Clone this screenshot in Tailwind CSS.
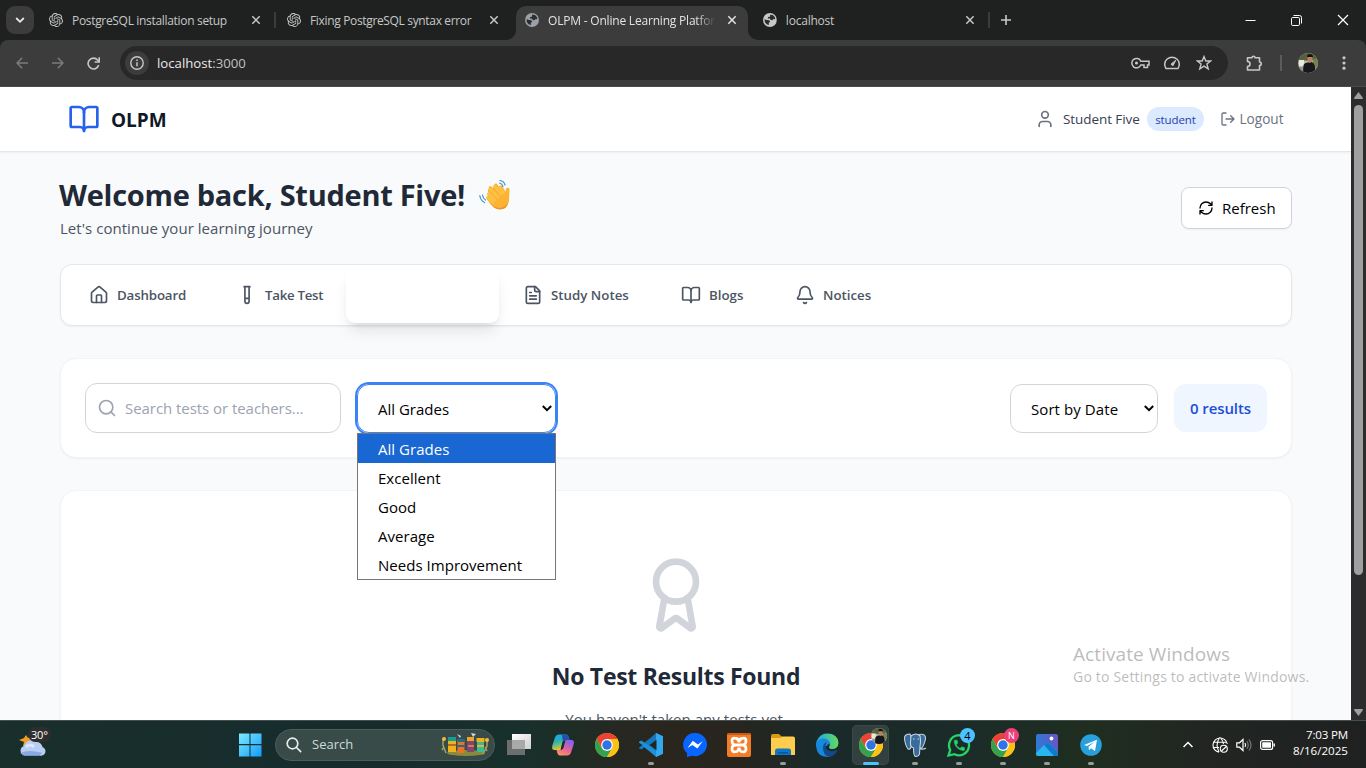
<!DOCTYPE html>
<html lang="en">
<head>
<meta charset="utf-8">
<title>OLPM - Online Learning Platform</title>
<script src="https://cdn.jsdelivr.net/npm/@tailwindcss/browser@4"></script>
</head>
<body class="w-[1366px] h-[768px] overflow-hidden flex flex-col font-['Open_Sans','Noto_Sans',sans-serif] bg-[#f9fafb] text-black relative">

<svg class="hidden">
  <symbol id="gpt" viewBox="0 0 24 24"><path fill="currentColor" d="M22.2819 9.8211a5.9847 5.9847 0 0 0-.5157-4.9108 6.0462 6.0462 0 0 0-6.5098-2.9A6.0651 6.0651 0 0 0 4.9807 4.1818a5.9847 5.9847 0 0 0-3.9977 2.9 6.0462 6.0462 0 0 0 .7427 7.0966 5.98 5.98 0 0 0 .511 4.9107 6.051 6.051 0 0 0 6.5146 2.9001A5.9847 5.9847 0 0 0 13.2599 24a6.0557 6.0557 0 0 0 5.7718-4.2058 5.9894 5.9894 0 0 0 3.9977-2.9001 6.0557 6.0557 0 0 0-.7475-7.0729zm-9.022 12.6081a4.4755 4.4755 0 0 1-2.8764-1.0408l.1419-.0804 4.7783-2.7582a.7948.7948 0 0 0 .3927-.6813v-6.7369l2.02 1.1686a.071.071 0 0 1 .038.052v5.5826a4.504 4.504 0 0 1-4.4945 4.4944zm-9.6607-4.1254a4.4708 4.4708 0 0 1-.5346-3.0137l.142.0852 4.783 2.7582a.7712.7712 0 0 0 .7806 0l5.8428-3.3685v2.3324a.0804.0804 0 0 1-.0332.0615L9.74 19.9502a4.4992 4.4992 0 0 1-6.1408-1.6464zM2.3408 7.8956a4.485 4.485 0 0 1 2.3655-1.9728V11.6a.7664.7664 0 0 0 .3879.6765l5.8144 3.3543-2.0201 1.1685a.0757.0757 0 0 1-.071 0l-4.8303-2.7865A4.504 4.504 0 0 1 2.3408 7.872zm16.5963 3.8558L13.1038 8.364 15.1192 7.2a.0757.0757 0 0 1 .071 0l4.8303 2.7913a4.4944 4.4944 0 0 1-.6765 8.1042v-5.6772a.79.79 0 0 0-.407-.667zm2.0107-3.0231l-.142-.0852-4.7735-2.7818a.7759.7759 0 0 0-.7854 0L9.409 9.2297V6.8974a.0662.0662 0 0 1 .0284-.0615l4.8303-2.7866a4.4992 4.4992 0 0 1 6.6802 4.66zM8.3065 12.863l-2.02-1.1638a.0804.0804 0 0 1-.038-.0567V6.0742a4.4992 4.4992 0 0 1 7.3757-3.4537l-.142.0805L8.704 5.459a.7948.7948 0 0 0-.3927.6813zm1.0976-2.3654l2.602-1.4998 2.6069 1.4998v2.9994l-2.5974 1.4997-2.6067-1.4997Z"/></symbol>
  <symbol id="globe" viewBox="0 0 14 14"><circle cx="7" cy="7" r="7" fill="currentColor"/><path d="M7.2 1.6 10 1.9 12 4.2 12.3 6.3 10.6 5.9 9.4 7.3 7.6 6.9 7 5.6 4.7 5.4 5.2 4 7 3.8Z M1.6 6.2 4 6.9 6.4 7.2 7.2 9 5.8 9.8 6 12.1 3.6 11.2 1.8 9Z" fill="#2c2d2d"/></symbol>
  <symbol id="x" viewBox="0 0 10 10"><path d="M1.3 1.3 8.7 8.7M8.7 1.3 1.3 8.7" stroke="currentColor" stroke-width="1.5" fill="none"/></symbol>
  <symbol id="book" viewBox="0 0 24 24" fill="none" stroke="currentColor" stroke-width="2" stroke-linecap="round" stroke-linejoin="round"><path d="M12 7v14"/><path d="M3 18a1 1 0 0 1-1-1V4a1 1 0 0 1 1-1h5a4 4 0 0 1 4 4 4 4 0 0 1 4-4h5a1 1 0 0 1 1 1v13a1 1 0 0 1-1 1h-6a3 3 0 0 0-3 3 3 3 0 0 0-3-3z"/></symbol>
  <symbol id="chrome" viewBox="0 0 24 24"><circle cx="12" cy="12" r="12" fill="#fbc116"/><path d="M1.6 6A12 12 0 0 1 22.4 6H12L6.8 15Z" fill="#ea4335"/><path d="M1.6 6A12 12 0 0 0 12 24L17.2 15 12 17.5 6.8 15Z" fill="#34a14f"/><path d="M22.4 6A12 12 0 0 1 12 24L17.2 15 18 12 16 6Z" fill="#fbc116"/><circle cx="12" cy="12" r="5.9" fill="#fff"/><circle cx="12" cy="12" r="4.7" fill="#2f73e8"/></symbol>
  <symbol id="avatar" viewBox="0 0 20 20"><path d="M0 0h20v20H0z" fill="#b9bba4"/><path d="M0 0h20v5L13 8 0 7z" fill="#56613e"/><path d="M1 7h5v6H1z" fill="#e8e9df"/><path d="M15 6h5v9h-5z" fill="#71844a"/><path d="M0 14h20v6H0z" fill="#9b8f84"/><path d="M5 20 5.500 12Q7 9 10 9.500L14 9Q18 11 17 20Z" fill="#17171c"/><path d="M9.500 3h5v5l-2.500 2-2.500-2z" fill="#b98269"/><path d="M9 4Q9 1 12 1T15 4L14 4H10Z" fill="#17120f"/></symbol>
</svg>

<!-- Browser tab strip -->
<div class="h-10 shrink-0 bg-[#1f2120] flex items-start text-[#c7c8c8] text-[12px] relative">
  <div class="w-10 h-10 flex items-center pl-1.5">
    <div class="w-7 h-7 rounded-[9px] bg-[#3c3c3c] flex items-center justify-center">
      <svg class="w-[10px] h-[10px] text-[#e8e8e8]" viewBox="0 0 10 10"><path d="M1.2 3 5 6.8 8.800 3" fill="none" stroke="currentColor" stroke-width="1.8"/></svg>
    </div>
  </div>
  <div class="w-[238px] h-10 flex items-center pl-[9px]">
    <svg class="w-[14px] h-[14px]"><use href="#gpt"/></svg>
    <span class="ml-[9px] w-[179px] pt-0.5 whitespace-nowrap tracking-[-0.32px]">PostgreSQL installation setup</span>
    <svg class="w-[10px] h-[10px]"><use href="#x"/></svg>
    <div class="w-[2px] h-4 bg-[#3c3c3c] ml-[13px]"></div>
  </div>
  <div class="w-[238px] h-10 flex items-center pl-[9px]">
    <svg class="w-[14px] h-[14px]"><use href="#gpt"/></svg>
    <span class="ml-[9px] w-[179px] pt-0.5 whitespace-nowrap tracking-[-0.34px]">Fixing PostgreSQL syntax error</span>
    <svg class="w-[10px] h-[10px]"><use href="#x"/></svg>
  </div>
  <div class="w-[232px] h-[34px] mt-1.5 rounded-t-[10px] bg-[#3c3c3c] flex items-center pl-[9px] pb-1.5 text-[#e3e3e3] relative">
    <svg class="absolute -left-[10px] bottom-0 w-[10px] h-[10px]" viewBox="0 0 10 10"><path d="M10 0V10H0A10 10 0 0 0 10 0" fill="#3c3c3c"/></svg>
    <svg class="absolute -right-[10px] bottom-0 w-[10px] h-[10px]" viewBox="0 0 10 10"><path d="M0 0V10H10A10 10 0 0 1 0 0" fill="#3c3c3c"/></svg>
    <svg class="w-[14px] h-[14px] text-[#9aa0a8]"><use href="#globe"/></svg>
    <span class="ml-[9px] w-[168px] pt-0.5 overflow-hidden whitespace-nowrap tracking-[-0.2px] [mask-image:linear-gradient(to_right,black_88%,transparent)]">OLPM - Online Learning Platform</span>
    <svg class="w-[10px] h-[10px] ml-[11px]"><use href="#x"/></svg>
  </div>
  <div class="w-[242px] h-10 flex items-center pl-[15px]">
    <svg class="w-[14px] h-[14px]"><use href="#globe"/></svg>
    <span class="ml-[9px] w-[181px] pt-0.5 whitespace-nowrap tracking-[-0.22px]">localhost</span>
    <svg class="w-[10px] h-[10px]"><use href="#x"/></svg>
    <div class="w-[2px] h-4 bg-[#3c3c3c] ml-[13px]"></div>
  </div>
  <div class="h-10 flex-1 flex items-center pl-[11px] pr-[17px] justify-between">
    <svg class="w-[10px] h-[10px]" viewBox="0 0 10 10"><path d="M5 0v10M0 5h10" stroke="currentColor" stroke-width="1.6"/></svg>
    <div class="flex items-center gap-[35px] text-white">
      <svg class="w-[11px] h-[11px]" viewBox="0 0 11 11"><path d="M.5 5.500h10" stroke="currentColor"/></svg>
      <svg class="w-[11px] h-[11px]" viewBox="0 0 11 11" fill="none" stroke="currentColor"><rect x=".5" y="2.500" width="8" height="8" rx="1.200"/><path d="M2.500 .500H8.500A2 2 0 0 1 10.500 2.500V8.500"/></svg>
      <svg class="w-[12px] h-[12px]" viewBox="0 0 12 12"><path d="M1 1 11 11M11 1 1 11" stroke="currentColor" stroke-width="1.200"/></svg>
    </div>
  </div>
</div>

<!-- Address bar -->
<div class="h-[47px] shrink-0 bg-[#1f2120]">
<div class="h-[47px] bg-[#3c3c3c] rounded-t-[8px] border-b border-[#4a4a4a] flex items-center text-[#c7c7c7]">
  <div class="flex w-[120px] pl-4 gap-6 items-center">
    <svg class="w-3 h-3 text-[#7b7b7b]" viewBox="0 0 12 12" fill="none" stroke="currentColor" stroke-width="1.500"><path d="M12 6H1M6.200 .8 1 6l5.200 5.200"/></svg>
    <svg class="w-3 h-3 text-[#7b7b7b]" viewBox="0 0 12 12" fill="none" stroke="currentColor" stroke-width="1.500"><path d="M0 6H11M5.800 .8 11 6 5.800 11.200"/></svg>
    <svg class="w-[13px] h-[13px] -ml-px" viewBox="0 0 13 13" fill="none" stroke="currentColor" stroke-width="1.600"><path d="M11.700 8A5.400 5.400 0 1 1 10.600 3L12 4.600"/><path d="M12.200 .3V5H7.600"/></svg>
  </div>
  <div class="w-[1108px] h-[34px] rounded-full bg-[#282828] flex items-center pl-[5px] pr-4">
    <div class="w-6 h-6 rounded-full bg-[#3c3c3c] flex items-center justify-center">
      <svg class="w-[14px] h-[14px]" viewBox="0 0 14 14"><circle cx="7" cy="7" r="6.200" fill="none" stroke="currentColor" stroke-width="1.400"/><path d="M7 6.200V10.300M7 3.600V5" stroke="currentColor" stroke-width="1.500"/></svg>
    </div>
    <span class="ml-2 pt-px text-[13.200px] text-[#e8e8e8] flex-1">localhost<span class="text-[#c0c0c0]">:3000</span></span>
    <div class="flex items-center gap-[14px]">
      <svg class="w-[19px] h-[12px] -ml-px" viewBox="0 0 19 12" fill="none" stroke="currentColor" stroke-width="1.500"><path d="M9.800 4.200H18V8H16.500V10.500H13V8H9.800A4.700 4.700 0 1 1 9.800 4.200Z"/><circle cx="5.500" cy="6" r="1.600" fill="currentColor" stroke="none"/></svg>
      <svg class="w-[18px] h-[14px] -ml-px mr-px" viewBox="0 0 18 14" fill="none" stroke="currentColor" stroke-width="1.500"><path d="M3 12.600A7.300 7.300 0 1 1 15 12.600Z"/><path d="M12.800 4.200 8 8.200 9.800 10Z" fill="currentColor" stroke-width="1"/></svg>
      <svg class="w-4 h-4" viewBox="0 0 16 16" fill="none" stroke="currentColor" stroke-width="1.400"><path d="M8 1.600 9.800 6H14.500L10.900 9 12.200 13.900 8 11.200 3.800 13.900 5.100 9 1.500 6H6.200Z"/></svg>
    </div>
  </div>
  <svg class="w-[17px] h-[17px] ml-[18px]" viewBox="0 0 17 17" fill="none" stroke="currentColor" stroke-width="1.600"><path d="M1.500 2.800H6A1.500 1.500 0 0 1 9 2.800H13.500V7A1.700 1.700 0 0 1 13.500 10.500V15H1.500V11.500A2.300 2.300 0 0 0 1.500 6.500Z" stroke-linejoin="round"/></svg>
  <div class="w-[2px] h-4 bg-[#5c5c5c] ml-[17px]"></div>
  <svg class="w-5 h-5 ml-4 rounded-full overflow-hidden"><use href="#avatar"/></svg>
  <svg class="w-1 h-[14px] ml-[24px]" viewBox="0 0 4 14" fill="currentColor"><circle cx="2" cy="1.800" r="1.600"/><circle cx="2" cy="7" r="1.600"/><circle cx="2" cy="12.200" r="1.600"/></svg>
</div>
</div>

<!-- Web page -->
<div class="h-[633px] shrink-0 flex">
  <div class="w-[1351px] h-[633px] overflow-hidden bg-[#f9fafb]">
    <header class="h-[65px] bg-white border-b border-[#e5e7eb] shadow-xs flex items-center pl-[68px] pr-[67px]">
      <svg class="w-8 h-8 text-[#2563eb]"><use href="#book"/></svg>
      <span class="ml-[11px] text-[19px] font-bold text-[#111827] pt-0.5">OLPM</span>
      <div class="ml-auto flex items-center">
        <svg class="w-5 h-5 text-[#6b7280]" viewBox="0 0 24 24" fill="none" stroke="currentColor" stroke-width="2" stroke-linecap="round" stroke-linejoin="round"><path d="M19 21v-2a4 4 0 0 0-4-4H9a4 4 0 0 0-4 4v2"/><circle cx="12" cy="7" r="4"/></svg>
        <span class="ml-2 w-[84px] text-[13.500px] text-[#374151] whitespace-nowrap tracking-[-0.08px]">Student Five</span>
        <span class="w-[57px] h-6 rounded-full bg-[#dbeafe] text-[#1e40af] text-[11.500px] tracking-[-0.1px] pt-px flex items-center justify-center">student</span>
        <svg class="w-4 h-4 ml-4 text-[#6b7280]" viewBox="0 0 24 24" fill="none" stroke="currentColor" stroke-width="2" stroke-linecap="round" stroke-linejoin="round"><path d="M9 21H5a2 2 0 0 1-2-2V5a2 2 0 0 1 2-2h4M16 17l5-5-5-5M21 12H9"/></svg>
        <span class="ml-[3.500px] w-[44.500px] text-[13.600px] text-[#6b7280]">Logout</span>
      </div>
    </header>

    <main class="pl-[60px] pr-[59px] pt-[23px]">
      <div class="flex justify-between">
        <div>
          <h1 class="h-10 flex items-center text-[29px] font-bold text-[#1f2937] whitespace-nowrap tracking-[-0.28px]"><span class="w-[419px] -ml-px mr-px">Welcome back, Student Five!</span>
            <svg class="w-8 h-8" viewBox="0 0 32 32"><path d="M10 9.500Q9 7 11.500 7L14 9 15 6Q16.500 3.500 18.500 5.500L20 8Q21.500 5.500 23.500 7.500L26.500 13 27 10Q28.500 7 30.500 10L30 22Q28 30 20.500 30 16 30 12 25.500L7.500 20Q6.500 17.500 9 17.500 7 15 9.500 14 8 11 10 9.500Z" fill="#fbb331"/><path d="M11 10 19 18M15.500 7 22 15M20.500 8 24.500 14M9.500 14.500 16 21M8.500 18.500 14 23" stroke="#fdc248" stroke-width="2.600" stroke-linecap="round" fill="none"/><path d="M10 23Q15 29 21 29 27 28 29.500 23 28 30.500 21 30.500 15 30.500 10 23Z" fill="#ee8f2b"/><path d="M21 1.500Q25 2 26 6M20.500 4Q23 4.500 24 7.500M.8 16.500Q1.500 21.500 5.500 23.500M3.500 16Q4 19.500 6.500 21" stroke="#3f93d2" stroke-width="1.200" fill="none" stroke-linecap="round"/></svg>
          </h1>
          <p class="h-6 leading-6 mt-px text-[15px] text-[#4b5563] tracking-[0.04px]">Let's continue your learning journey</p>
        </div>
        <button class="mt-[12px] w-[111px] h-[42px] rounded-lg border border-[#d1d5db] bg-white shadow-xs flex items-center pl-4 text-[15px]">
          <svg class="w-4 h-4 mr-2" viewBox="0 0 24 24" fill="none" stroke="currentColor" stroke-width="2" stroke-linecap="round" stroke-linejoin="round"><path d="M3 12a9 9 0 0 1 9-9 9.750 9.750 0 0 1 6.740 2.740L21 8M21 3v5h-5M21 12a9 9 0 0 1-9 9 9.750 9.750 0 0 1-6.740-2.740L3 16M8 16H3v5"/></svg>Refresh
        </button>
      </div>

      <nav class="mt-[24px] h-[62px] rounded-xl border border-[#e5e7eb] bg-white shadow-xs flex items-center pl-1 text-[13.300px] font-semibold text-[#4b5563] whitespace-nowrap [&>a]:flex [&>a]:items-center [&>a]:pl-6 [&>a]:gap-2 [&_svg]:size-5 [&_span]:pt-px">
        <a class="w-[148px] tracking-[-0.15px]"><svg viewBox="0 0 24 24" fill="none" stroke="currentColor" stroke-width="2" stroke-linecap="round" stroke-linejoin="round"><path d="M15 21v-8a1 1 0 0 0-1-1h-4a1 1 0 0 0-1 1v8"/><path d="M3 10a2 2 0 0 1 .709-1.528l7-5.999a2 2 0 0 1 2.582 0l7 5.999A2 2 0 0 1 21 10v9a2 2 0 0 1-2 2H5a2 2 0 0 1-2-2z"/></svg><span>Dashboard</span></a>
        <a class="w-[133px] tracking-[-0.3px]"><svg viewBox="0 0 24 24" fill="none" stroke="currentColor" stroke-width="2" stroke-linecap="round" stroke-linejoin="round"><path d="M14.500 2v17.500c0 1.400-1.100 2.500-2.500 2.500c-1.400 0-2.500-1.100-2.500-2.500V2M8.500 2h7M14.500 16h-5"/></svg><span>Take Test</span></a>
        <a class="w-[153px] h-[55px] mt-px rounded-[9px] bg-white shadow-lg"></a>
        <a class="w-[158px]"><svg viewBox="0 0 24 24" fill="none" stroke="currentColor" stroke-width="2" stroke-linecap="round" stroke-linejoin="round"><path d="M15 2H6a2 2 0 0 0-2 2v16a2 2 0 0 0 2 2h12a2 2 0 0 0 2-2V7Z"/><path d="M14 2v4a2 2 0 0 0 2 2h4M10 9H8M16 13H8M16 17H8"/></svg><span>Study Notes</span></a>
        <a class="w-[114px]"><svg><use href="#book"/></svg><span>Blogs</span></a>
        <a class="w-[126px]"><svg viewBox="0 0 24 24" fill="none" stroke="currentColor" stroke-width="2" stroke-linecap="round" stroke-linejoin="round"><path d="M10.268 21a2 2 0 0 0 3.464 0"/><path d="M3.262 15.326A1 1 0 0 0 4 17h16a1 1 0 0 0 .74-1.673C19.410 13.956 18 12.499 18 8A6 6 0 0 0 6 8c0 4.499-1.411 5.956-2.738 7.326"/></svg><span>Notices</span></a>
      </nav>

      <section class="mt-8 h-[100px] rounded-2xl border border-[#f3f4f6] bg-white shadow-xs flex items-start pt-6 px-6 text-[15px]">
        <div class="w-[256px] h-[50px] rounded-xl border border-[#d1d5db] flex items-center pl-[11px] text-[#9ca3af] tracking-[-0.05px]">
          <svg class="w-5 h-5 mr-2" viewBox="0 0 24 24" fill="none" stroke="currentColor" stroke-width="2" stroke-linecap="round"><circle cx="11" cy="11" r="8"/><path d="m21 21-4.300-4.300"/></svg>Search tests or teachers...
        </div>
        <div class="relative ml-4 mt-px">
          <div class="w-[199px] h-[49px] rounded-xl border border-[#3b82f6] ring-2 ring-[#3b82f6] flex items-center justify-between pl-5 pr-[3px] pt-0.5">All Grades
            <svg class="w-[10px] h-[7px] -mt-0.5" viewBox="0 0 10 7"><path d="M.8 1 5 5.200 9.200 1" fill="none" stroke="#000" stroke-width="2"/></svg>
          </div>
          <!-- Open option list -->
          <ul class="absolute left-0 top-[49px] w-[199px] h-[147px] z-10 border border-[#767676] bg-white [&>li]:h-[29px] [&>li]:pl-5 [&>li]:leading-[30px] tracking-[0.03px]">
            <li class="bg-[#1967d2] text-white">All Grades</li><li>Excellent</li><li>Good</li><li>Average</li><li>Needs Improvement</li>
          </ul>
        </div>
        <div class="ml-auto mt-px w-[148px] h-[49px] rounded-xl border border-[#d1d5db] flex items-center justify-between pl-5 pr-[3px] pt-0.5"><span class="tracking-[0.08px]">Sort by Date</span>
          <svg class="w-[10px] h-[7px] -mt-0.5" viewBox="0 0 10 7"><path d="M.8 1 5 5.200 9.200 1" fill="none" stroke="#000" stroke-width="2"/></svg>
        </div>
        <div class="ml-4 mt-px w-[93px] h-12 rounded-xl bg-[#eff6ff] text-[#1d4ed8] font-semibold flex items-center justify-center tracking-[-0.1px]">0 results</div>
      </section>

      <section class="mt-8 h-[400px] rounded-2xl border border-[#f3f4f6] bg-white shadow-xs flex flex-col items-center pt-16">
        <svg class="w-20 h-20 text-[#d1d5db]" viewBox="0 0 24 24" fill="none" stroke="currentColor" stroke-width="2" stroke-linecap="round" stroke-linejoin="round"><path d="m15.477 12.890 1.515 8.526a.5.5 0 0 1-.81.47l-3.580-2.687a1 1 0 0 0-1.197 0l-3.586 2.686a.5.5 0 0 1-.81-.469l1.514-8.526"/><circle cx="12" cy="8" r="6"/></svg>
        <h2 class="mt-[25px] h-8 leading-8 text-[23px] font-bold text-[#1f2937] whitespace-nowrap tracking-[-0.3px]">No Test Results Found</h2>
        <p class="mt-[15px] leading-6 text-[15px] text-[#4b5563] tracking-[0.04px]">You haven't taken any tests yet.</p>
      </section>
    </main>
  </div>
  <div class="w-[15px] bg-[#2c2c2c] flex flex-col items-center pt-[5px] pb-1">
    <svg class="w-[9px] h-[7px] shrink-0" viewBox="0 0 9 7"><path d="M4.500 0 9 6Q9 7 8 7H1Q0 7 0 6Z" fill="#9f9f9f"/></svg>
    <div class="w-[9px] h-[470px] rounded-full bg-[#9f9f9f] mt-[6px]"></div>
    <svg class="w-[9px] h-[7px] shrink-0 mt-auto" viewBox="0 0 9 7"><path d="M4.500 7 9 1Q9 0 8 0H1Q0 0 0 1Z" fill="#9f9f9f"/></svg>
  </div>
</div>

<!-- Activation watermark -->
<div class="absolute left-[1073px] top-[641px] text-[#8e8e8e]/60 whitespace-nowrap">
  <div class="text-[19px] leading-[26px] tracking-[0.08px]">Activate Windows</div>
  <div class="text-[14px] leading-[20px] tracking-[0.2px]">Go to Settings to activate Windows.</div>
</div>

<!-- Taskbar -->
<footer class="h-12 shrink-0 border-t border-[#43504e] bg-[linear-gradient(90deg,#182f2b_0%,#172b2d_28%,#18302b_38%,#2a261e_48%,#27251e_54%,#1a2a2a_60%,#1b2b29_70%,#1f2e1f_80%,#222522_88%,#1f2121_100%)] flex items-center relative">
  <div class="w-[238px] h-12 pl-[17px] pt-[6px]">
    <div class="relative w-9 h-9">
      <svg class="w-9 h-9" viewBox="0 0 36 36"><path d="m9 8 2 3 3-2v4l5 1-5 7-8-2 1-4-5-2 5-2Z" fill="#f59a22"/><path d="M7 28.500A5 5 0 0 1 7 19 7.500 7.500 0 0 1 19 15 6 6 0 0 1 25.500 20 4.500 4.500 0 0 1 22.500 28.500Z" fill="#b9cef4"/><path d="M9 20a5 5 0 0 1 8 0" fill="none" stroke="#dce8fd" stroke-width="3"/><path d="M3.500 26Q12 22 25.500 26L22 28.500H7Z" fill="#86a9e6"/></svg>
      <span class="absolute left-[11px] top-0 w-[23px] h-[15px] rounded-full bg-[#2e2e2e] text-white text-[11px] leading-[15px] pl-[3px] tracking-[-0.2px]">30°</span>
    </div>
  </div>
  <svg class="w-6 h-6" viewBox="0 0 24 24"><defs><linearGradient id="win" x1="0" y1="0" x2="1" y2="1"><stop stop-color="#7eeafd"/><stop offset="1" stop-color="#119bfb"/></linearGradient></defs><path d="M1 .5H11.500V11H1ZM12.500 .5H23.500V11H12.500ZM1 12.200H11.500V23.500H1ZM12.500 12.200H23.500V23.500H12.500Z" fill="url(#win)"/></svg>
  <div class="ml-[13px] w-[220px] h-8 rounded-full bg-[#384b49] border border-[#4c5d5a] flex items-center pl-[10px]">
    <svg class="w-4 h-4" viewBox="0 0 16 16" fill="none" stroke="#e8ecec" stroke-width="1.700" stroke-linecap="round"><circle cx="6.500" cy="6.500" r="5.300"/><path d="m10.500 10.500 4.200 4.200"/></svg>
    <span class="ml-[10px] text-[13px] text-[#d2dad8] w-[129px]">Search</span>
    <svg class="w-12 h-6" viewBox="0 0 48 24"><ellipse cx="25" cy="20" rx="19" ry="3" fill="#878b3c"/><path d="M2 7v5l3 8M46 8v5l-4 8M3 14l-2 3M44 14l2 4" stroke="#9ca55f" stroke-width="1.500" fill="none"/><path d="M7 6h8v13H7z" fill="#eeb21e"/><path d="M7 4h8v4H7z" fill="#159c99"/><path d="M7 11h8v2H7z" fill="#b26f17"/><path d="M16.500 7h7v13h-7z" fill="#ec7228"/><path d="M16.500 6h7v3h-7zM16.500 12h7v2h-7z" fill="#216f84"/><path d="M26 5h7v14h-7z" fill="#7d4673"/><path d="M26 4h7v4h-7z" fill="#f0a52a"/><path d="M27 12h6v2h-6z" fill="#ec7242"/><path d="M36 7h7v12h-7z" fill="#36bb9c"/><path d="M35.500 5h8v4h-8zM36 12h7v2h-7z" fill="#eeb21e"/><circle cx="3" cy="6" r="2" fill="#f1bd34"/><circle cx="46" cy="7" r="2" fill="#f1bd34"/><path d="m16 1 4 2-1 2ZM30 0l5 1-3 3Z" fill="#d4d6df"/></svg>
  </div>

  <div class="ml-[2px] flex h-12 [&>div]:w-11 [&>div]:h-12 [&>div]:flex [&>div]:justify-center [&>div]:items-center [&>div]:relative">
    <div><svg class="w-6 h-6" viewBox="0 0 24 24"><defs><linearGradient id="tv" x2="1" y2="1"><stop stop-color="#fff"/><stop offset="1" stop-color="#cfcfcf"/></linearGradient></defs><path d="M5 1H24V16H5Z" fill="url(#tv)"/><path d="M0 7H18V22H0Z" fill="#777" opacity=".88"/><path d="M5 7H18V16H5Z" fill="#a9a9a9"/></svg></div>
    <div><svg class="w-6 h-6" viewBox="0 0 24 24"><defs><linearGradient id="cp1" x2=".3" y2="1"><stop stop-color="#209cf0"/><stop offset=".5" stop-color="#25b6b4"/><stop offset="1" stop-color="#e5c52c"/></linearGradient><linearGradient id="cp2" x2="0" y2="1" x1=".4"><stop stop-color="#8d62e8"/><stop offset=".5" stop-color="#ec6294"/><stop offset="1" stop-color="#fba455"/></linearGradient></defs><path d="M8 1.500H15Q17 1.500 18 5L18.500 7H14Q12 7 11.300 10L9.500 17H3.500Q0 17 1.500 12L4 4.500Q5 1.500 8 1.500Z" fill="url(#cp1)"/><path d="M16 22.500H9Q7 22.500 6 19L5.500 17H10Q12 17 12.700 14L14.500 7H20.500Q24 7 22.500 12L20 19.500Q19 22.500 16 22.500Z" fill="url(#cp2)"/><path d="M11 1.500h4q2 0 3 3.500l.5 2H14q-1.500 0-2.200 2Z" fill="#214fb0"/><path d="m11.300 9.500 2.200-1-1.500 7-2 1Z" fill="#1f2c2c"/></svg></div>
    <div><svg class="w-6 h-6"><use href="#chrome"/></svg></div>
    <div><svg class="w-6 h-6" viewBox="0 0 24 24"><path d="M17 0 24 3.200V20.800L17 24 6 13.500 2.500 16.500 0 15.300V14L12.500 4Z" fill="#1279bd"/><path d="M0 8.700 2.500 7.500 17.500 18V24L0 10Z" fill="#1c91da"/><path d="M17 0 24 3.200V20.800L17 24Z" fill="#32a9ef"/><path d="M17.500 6.800V17.200L10.500 12Z" fill="#24251f"/><path d="M0 10 3.500 12 0 14.500Z" fill="#25251f"/></svg><i class="absolute bottom-[4px] w-1.5 h-[3px] rounded-full bg-[#9b9c98]"></i></div>
    <div><svg class="w-6 h-6" viewBox="0 0 24 24"><path d="M12 0A11.700 11.700 0 0 1 24 11.500 11.700 11.700 0 0 1 9 22.700L4 24V20A11.500 11.500 0 0 1 12 0Z" fill="#0866ff"/><path d="m4.500 15 5.300-7.300 5 3.700 4.900-3.100-5.300 7.300-5-3.700Z" fill="#fff"/></svg></div>
    <div><svg class="w-6 h-6" viewBox="0 0 24 24"><rect width="24" height="24" rx="2" fill="#f47c24"/><path d="M0 2Q0 0 2 0H22Q24 0 24 2Z" fill="#c85b16"/><path d="M9 5.500Q5 4 5 8T9 12Q5 12 5 16T10 18.500Q12 17 12 14.500 12 17 14 18.500 19 20 19 16T15 12Q19 12 19 8T15 5.500Q12 6 12 9.500 12 6 9 5.500M8 12H16" fill="none" stroke="#fff" stroke-width="2.800"/></svg></div>
    <div><svg class="w-6 h-6" viewBox="0 0 24 24"><path d="M0 3Q0 1 2 1H8L11 4V8H0Z" fill="#d89b10"/><path d="M0 5H9L11 3.500H22Q24 3.500 24 5.500V22H0Z" fill="#fdcd4b"/><path d="M4 22V18Q4 15.500 6.500 15.500H17.500Q20 15.500 20 18V22Z" fill="#0f75c8"/><path d="M7 19h10v1.500H7z" fill="#07549c"/></svg><i class="absolute bottom-[4px] w-1.5 h-[3px] rounded-full bg-[#9b9c98]"></i></div>
    <div><svg class="w-6 h-6" viewBox="0 0 24 24"><defs><linearGradient id="ed" x2="1"><stop stop-color="#20a6e8"/><stop offset="1" stop-color="#63db5b"/></linearGradient></defs><path d="M1 13A11.500 11.500 0 0 1 12 .5Q23 .5 23.500 10 23 16 17 16 14 16 14 14 15.500 12 14 9Z" fill="url(#ed)"/><path d="M1 13Q1 6 8 5.500 14 5.500 15 10L10 14Q9 20 15 21.500L17 22.500Q14 24 12 24 2 24 1 13Z" fill="#1688dd"/><path d="M8 15Q8 10 12 9 9 13 11.500 16 15 20 21.500 17 22.500 17 22 18.500 19 23 14 24 8 22 8 15Z" fill="#134a8b"/></svg></div>
    <div><span class="absolute w-[37px] h-10 top-1 left-[3px] rounded-[5px] bg-white/10 border border-white/5"></span><svg class="w-6 h-6 relative"><use href="#chrome"/></svg><svg class="absolute w-4 h-4 left-[22px] top-[7px] rounded-full overflow-hidden"><use href="#avatar"/></svg><i class="absolute bottom-[4px] w-4 h-[3px] rounded-full bg-[#4cc2ff]"></i></div>
    <div><svg class="w-6 h-6" viewBox="0 0 24 24" fill="#376c9c" stroke="#c6d2dc" stroke-width="1.100"><path d="M7 1Q1 1 1.500 6 2.500 13 5 16 7 17 8 14L9 10 8 3Z"/><path d="M16 1.500Q23 0 22.500 6 21 13 18 16L15 12Z"/><path d="M8 3Q13-1 17 3 18 8 17 13L16.500 21Q16 23.500 12.500 23.500 10.500 23 10.500 15 7 14 7.500 9Z"/><path d="M17 15.500Q20 17 23 15" fill="none"/><path d="M10 6h1.500M14.500 6H16" /></svg><i class="absolute bottom-[4px] w-1.5 h-[3px] rounded-full bg-[#9b9c98]"></i></div>
    <div><svg class="w-6 h-6" viewBox="0 0 24 24"><path d="M1.500 22.500 3.200 17A10 10 0 1 1 7.500 21.200Z" fill="none" stroke="#25d366" stroke-width="2.300"/><path transform="translate(5.500 5.500) scale(.57)" fill="#25d366" stroke="#25d366" d="M6.620 10.790c1.440 2.830 3.760 5.140 6.590 6.590l2.200-2.200c.27-.27.67-.36 1.020-.24 1.120.37 2.330.57 3.570.57.55 0 1 .45 1 1V20c0 .55-.45 1-1 1-9.390 0-17-7.610-17-17 0-.55.45-1 1-1h3.500c.55 0 1 .45 1 1 0 1.250.2 2.450.57 3.570.11.35.03.74-.25 1.020l-2.200 2.200z"/></svg><span class="absolute left-[23px] top-[7px] w-[15px] h-[15px] rounded-full bg-[#4cc2ff] text-black text-[11px] leading-[15px] text-center">4</span><i class="absolute bottom-[4px] w-1.5 h-[3px] rounded-full bg-[#9b9c98]"></i></div>
    <div><svg class="w-6 h-6"><use href="#chrome"/></svg><span class="absolute left-[23px] top-[7px] w-[15px] h-[15px] rounded-full bg-[#ec407a] text-white text-[9px] leading-[15px] text-center">N</span><i class="absolute bottom-[4px] w-1.5 h-[3px] rounded-full bg-[#9b9c98]"></i></div>
    <div><svg class="w-[22px] h-[22px]" viewBox="0 0 22 22"><defs><linearGradient id="ph" x2="1"><stop stop-color="#2d7ad5"/><stop offset="1" stop-color="#6b54c7"/></linearGradient></defs><rect width="22" height="22" rx="2" fill="url(#ph)"/><path d="M0 19 10 9Q11.500 8 13 9L22 18V20Q22 22 20 22H2Q0 22 0 20Z" fill="#29b5ee"/><path d="m8 11 2-2q1.500-1 3 0l9 9v2q0 2-2 2H18Z" fill="#1279cf"/><circle cx="15.500" cy="4.500" r="1.900" fill="#fff"/></svg><i class="absolute bottom-[4px] w-1.5 h-[3px] rounded-full bg-[#9b9c98]"></i></div>
    <div><svg class="w-[22px] h-[22px]" viewBox="0 0 22 22"><circle cx="11" cy="11" r="10.800" fill="#27a0dc"/><path d="m4 11 13-5.300-2 11.300-4-2.800-2 2-.5-3.500 6-5-7.500 4.300Z" fill="#fff"/></svg><i class="absolute bottom-[4px] w-1.5 h-[3px] rounded-full bg-[#9b9c98]"></i></div>
  </div>

  <div class="ml-auto flex items-center text-white pr-[18px]">
    <svg class="w-[10px] h-[7px]" viewBox="0 0 10 7"><path d="M.5 6 5 1.500 9.500 6" fill="none" stroke="currentColor" stroke-width="1.500"/></svg>
    <svg class="w-4 h-4 ml-[19px]" viewBox="0 0 16 16" fill="none" stroke="currentColor" stroke-width="1.100"><path d="M7 15.300A7.200 7.200 0 1 1 15.300 7M7.500 .8Q3 7.500 7 15M8.500 .8Q11 3 11.500 7M1 5.300H15M1 10.500H7"/><circle cx="11.800" cy="11.800" r="3.500"/><path d="m9.500 14 4.800-4.500"/></svg>
    <svg class="w-4 h-[14px] ml-2" viewBox="0 0 16 14" fill="none" stroke="currentColor" stroke-width="1.200"><path d="M.8 4.800H3.500L7 1.500V12.500L3.500 9.200H.8Z"/><path d="M9 5Q10.300 7 9 9"/><path d="M11 3.200Q13.400 7 11 10.800M13 1.500Q17 7 13 12.500" stroke="#777"/></svg>
    <svg class="w-[15px] h-[10px] ml-2" viewBox="0 0 15 10"><rect x=".6" y=".6" width="12" height="8.800" rx="2" fill="none" stroke="#fff" stroke-width="1.200"/><rect x="2.200" y="2.200" width="8.800" height="5.600" rx=".6" fill="#fff"/><path d="M14.200 3.500v3" stroke="#fff" stroke-width="1.400"/></svg>
    <div class="ml-[11px] w-[62px] text-right text-[11.600px] leading-4 whitespace-nowrap -mt-1"><span class="tracking-[-0.2px]">7:03 PM</span><br>8/16/2025</div>
  </div>
</footer>
</body>
</html>
